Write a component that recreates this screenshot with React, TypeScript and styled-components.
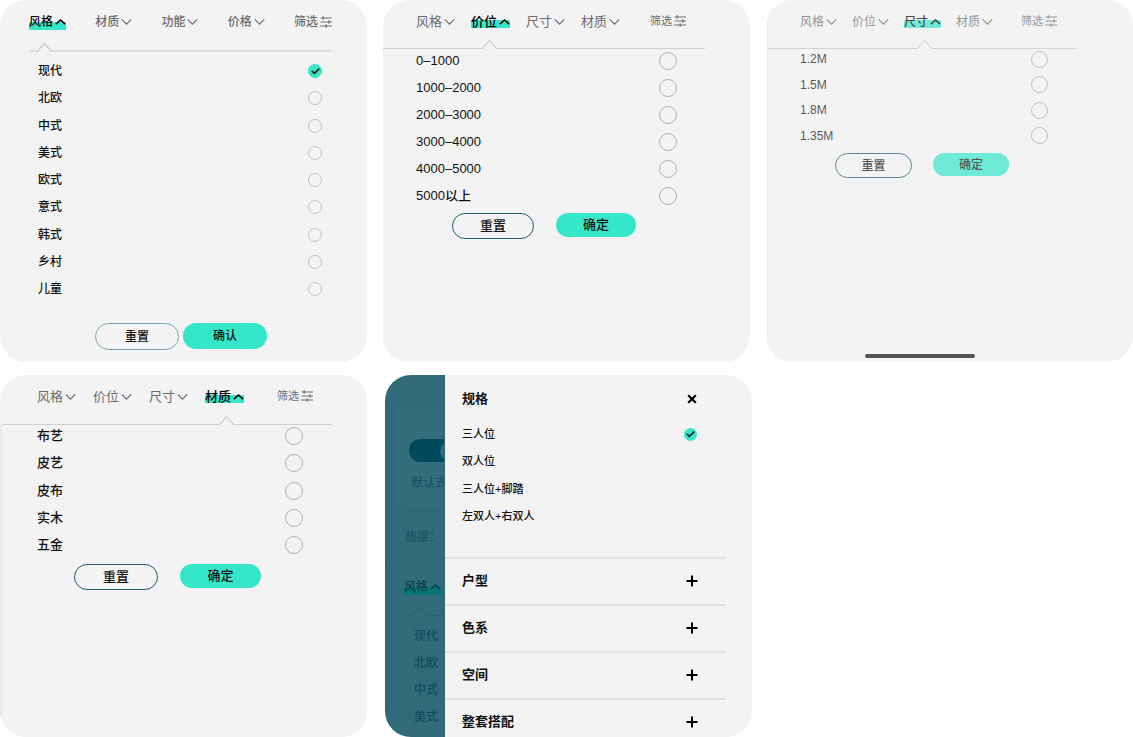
import React from "react";
import styled, { createGlobalStyle, css } from "styled-components";

const GlobalStyle = createGlobalStyle`
  *, *::before, *::after { box-sizing: border-box; }
  body {
    margin: 0;
    background: #fff;
    color: #111;
    font-family: "Liberation Sans", "Noto Sans CJK SC", sans-serif;
  }
  button, input { font: inherit; color: inherit; margin: 0; padding: 0; }
  ul, h2, h3 { margin: 0; padding: 0; font: inherit; list-style: none; }
`;

const ACCENT = "#36e6c9";

const Page = styled.main`
  display: flex;
  flex-direction: column;
  gap: 13px;
`;

const CardRow = styled.div<{ $gap: number }>`
  display: flex;
  gap: ${(p) => p.$gap}px;
`;

const Card = styled.section`
  flex: 0 0 calc((100% - 32px) / 3);
  min-height: 362px;
  border-radius: 26px;
  background: #f3f3f3;
  overflow: hidden;
  display: flex;
  flex-direction: column;
`;

const Content = styled.form<{ $faded?: boolean }>`
  flex: 1;
  display: flex;
  flex-direction: column;
  padding-top: 14px;
  opacity: ${(p) => (p.$faded ? 0.7 : 1)};
`;

const TabBar = styled.nav<{ $left: number; $right: number; $gap: number; $spread?: boolean; $size: number }>`
  display: flex;
  gap: ${(p) => p.$gap}px;
  padding: 0 ${(p) => p.$right}px 0 ${(p) => p.$left}px;
  justify-content: ${(p) => (p.$spread ? "space-between" : "flex-start")};
  font-size: ${(p) => p.$size}px;
  font-weight: ${(p) => (p.$spread ? 500 : 400)};
`;

const Tab = styled.button<{ $active?: boolean; $low?: boolean }>`
  display: flex;
  align-items: center;
  gap: 2px;
  height: 16px;
  border: 0;
  background: none;
  line-height: 16px;
  color: #6c6c6c;
  white-space: nowrap;
  ${(p) =>
    p.$active &&
    css`
      color: #000;
      font-weight: 500;
      background: linear-gradient(${ACCENT}, ${ACCENT}) 0 ${p.$low ? 8 : 6}px / 100% 8px no-repeat;
    `}
`;

const FilterButton = styled(Tab)`
  margin-left: auto;
  font-size: 11px;
  height: 14px;
`;

const Divider = styled.div<{ $top: number; $left: number; $right: number }>`
  display: flex;
  align-items: flex-end;
  margin: ${(p) => p.$top}px ${(p) => p.$right}px 0 ${(p) => p.$left}px;
  svg { display: block; flex: none; }
`;

const Rule = styled.span<{ $width?: number; $thick?: boolean; $color: string }>`
  flex: ${(p) => (p.$width === undefined ? "1" : `0 0 ${p.$width}px`)};
  height: ${(p) => (p.$thick ? 2 : 1)}px;
  background: ${(p) => p.$color};
`;

const Body = styled.div<{ $edge?: boolean }>`
  flex: 1;
  border-left: ${(p) => (p.$edge ? "2px solid #e9e9e9" : "0")};
`;

const Options = styled.ul<{ $top: number; $left: number; $right: number; $height: number; $size: number }>`
  display: flex;
  flex-direction: column;
  justify-content: space-between;
  min-height: ${(p) => p.$height}px;
  margin-top: ${(p) => p.$top}px;
  padding: 0 ${(p) => p.$right}px 0 ${(p) => p.$left}px;
  font-size: ${(p) => p.$size}px;
  font-weight: 500;
`;

const Option = styled.label`
  display: flex;
  align-items: center;
  justify-content: space-between;
  line-height: 18px;
`;

const RadioBox = styled.span`
  display: grid;
  place-items: center;
  > * { grid-area: 1 / 1; }
  svg { pointer-events: none; display: none; }
  input:checked + svg { display: block; }
`;

const RadioInput = styled.input<{ $size: number; $color: string }>`
  appearance: none;
  width: ${(p) => p.$size}px;
  height: ${(p) => p.$size}px;
  border: 1px solid ${(p) => p.$color};
  border-radius: 50%;
  &:checked { background: ${ACCENT}; border-color: ${ACCENT}; }
`;

const Actions = styled.div<{ $top: number; $left: number; $gap: number }>`
  display: flex;
  align-items: flex-start;
  gap: ${(p) => p.$gap}px;
  margin-top: ${(p) => p.$top}px;
  padding-left: ${(p) => p.$left}px;
`;

const ActionButton = styled.button<{ $w: number; $h: number; $size: number; $line?: string }>`
  width: ${(p) => p.$w}px;
  height: ${(p) => p.$h}px;
  border: ${(p) => (p.$line ? `1px solid ${p.$line}` : "0")};
  border-radius: 14px;
  background: ${(p) => (p.$line ? "transparent" : ACCENT)};
  color: #111;
  font-size: ${(p) => p.$size}px;
  font-weight: 500;
  line-height: 20px;
`;

const HomeBar = styled.div`
  width: 110px;
  height: 4px;
  margin: auto auto 4px 99px;
  border-radius: 2px;
  background: #555;
`;

const DrawerCard = styled(Card)`
  flex-direction: row;
  height: 362px;
`;

const Backdrop = styled.div`
  flex: 0 0 60px;
  overflow: hidden;
  background: #316a79;
  color: #17505f;
  border-right: 1px solid #286575;
  white-space: nowrap;
  font-size: 12px;
  line-height: 18px;
`;

const TogglePanel = styled.div`
  width: 120px;
  height: 99px;
  margin: 32px 0 0 10px;
  padding: 32px 0 0 14px;
  border-radius: 10px;
  background: #346d7b;
`;

const Toggle = styled.div`
  display: flex;
  align-items: center;
  justify-content: flex-end;
  width: 54px;
  height: 23px;
  padding-right: 3px;
  border-radius: 12px;
  background: #004a5b;
  &::after {
    content: "";
    width: 20px;
    height: 20px;
    border-radius: 50%;
    background: #316a79;
  }
`;

const ToggleText = styled.p`
  margin: 12px 0 0 2px;
`;

const HotSearch = styled.p`
  margin: 22px 0 0;
  padding: 0 0 17px 20px;
  border-bottom: 1px solid #2d6675;
`;

const DimTab = styled.div`
  display: flex;
  align-items: center;
  gap: 2px;
  width: 38px;
  margin: 15px 0 0 19px;
  color: #0b404d;
  font-weight: 500;
  line-height: 16px;
  background: linear-gradient(#067674, #067674) 0 8px / 100% 8px no-repeat;
`;

const DimList = styled.ul`
  display: grid;
  gap: 9px;
  padding: 11px 0 0 29px;
  color: #134b5a;
  font-weight: 500;
`;

const Drawer = styled.div`
  flex: 1;
  padding-right: 26px;
`;

const DrawerHeading = styled.div`
  display: flex;
  align-items: center;
  justify-content: space-between;
  padding: 0 28px 0 17px;
  font-size: 13px;
  font-weight: 700;
  color: #111;
  line-height: 18px;
`;

const DrawerTop = styled.div`
  height: 182px;
  padding-top: 15px;
`;

const DrawerSection = styled.div`
  height: 47px;
  padding-top: 13px;
  border-top: 2px solid #e2e2e2;
`;

const IconButton = styled.button`
  display: grid;
  place-items: center;
  width: 12px;
  height: 12px;
  border: 0;
  background: none;
`;

function Chevron({ up = false, bold = false }: { up?: boolean; bold?: boolean }) {
  return (
    <svg width="11" height="8" viewBox="0 0 12 8" fill="none" stroke="currentColor" strokeWidth={bold ? 1.8 : 1.3} aria-hidden="true">
      <path d={up ? "M1 6.2 6 1.8l5 4.4" : "M.8 1.2 6 6.3l5.2-5.1"} />
    </svg>
  );
}

function FilterIcon() {
  return (
    <svg width="12" height="12" viewBox="0 0 12 12" fill="none" stroke="currentColor" strokeWidth="1.2" aria-hidden="true">
      <path d="M.5 2H12M.5 6H12M0 10h12M3.2.2v3.6M9 4.2v3.6M6.2 8.2v3.6" />
    </svg>
  );
}

function Notch({ color, thick = false }: { color: string; thick?: boolean }) {
  return (
    <svg width="15" height="10" viewBox="0 0 15 10" fill="none" stroke={color} strokeWidth={thick ? 1.4 : 1} aria-hidden="true">
      <path d={thick ? "M0 9h.6L7.5 1.6 14.4 9h.6" : "M0 9.5h.4L7.5 1.5l7.1 8h.4"} />
    </svg>
  );
}

function Radio({ name, size, color, checked }: { name: string; size: number; color: string; checked?: boolean }) {
  return (
    <RadioBox>
      <RadioInput type="radio" name={name} $size={size} $color={color} defaultChecked={checked} />
      <svg width="9" height="8" viewBox="0 0 9 8" fill="none" stroke="#06251f" strokeWidth="1.7" aria-hidden="true">
        <path d="M.8 3.8 3.5 6.4 8.2 1.6" />
      </svg>
    </RadioBox>
  );
}

type PanelSpec = {
  id: string;
  tabs: string[];
  active: number;
  options: string[];
  checked?: number;
  primary?: boolean;
  faded?: boolean;
  edge?: boolean;
  confirm: string;
  resetLine: string;
  lineColor: string;
  radio: { size: number; color: string };
  bar: { left: number; right: number; gap: number; size: number };
  divider: { top: number; left: number; right: number; lead: number };
  list: { top: number; left: number; right: number; height: number; size: number };
  actions: { top: number; left: number; gap: number; reset: [number, number]; ok: [number, number]; size: number };
};

const style: PanelSpec = {
  id: "style",
  tabs: ["风格", "材质", "功能", "价格"],
  active: 0,
  options: ["现代", "北欧", "中式", "美式", "欧式", "意式", "韩式", "乡村", "儿童"],
  checked: 0,
  primary: true,
  confirm: "确认",
  resetLine: "#7fa3ae",
  lineColor: "#dcdcdc",
  radio: { size: 14, color: "#c0c0c0" },
  bar: { left: 29, right: 35, gap: 0, size: 12 },
  divider: { top: 12, left: 30, right: 36, lead: 7 },
  list: { top: 10, left: 38, right: 45, height: 236, size: 12 },
  actions: { top: 25, left: 95, gap: 4, reset: [84, 27], ok: [84, 26], size: 12 },
};

const price: PanelSpec = {
  id: "price",
  tabs: ["风格", "价位", "尺寸", "材质"],
  active: 1,
  options: ["0–1000", "1000–2000", "2000–3000", "3000–4000", "4000–5000", "5000以上"],
  confirm: "确定",
  resetLine: "#1f5a6c",
  lineColor: "#cfcfcf",
  radio: { size: 18, color: "#b0b0b0" },
  bar: { left: 33, right: 64, gap: 16, size: 13 },
  divider: { top: 9, left: 0, right: 45, lead: 99 },
  list: { top: 3, left: 33, right: 73, height: 153, size: 13 },
  actions: { top: 8, left: 69, gap: 22, reset: [82, 26], ok: [80, 24], size: 13 },
};

const size: PanelSpec = {
  id: "size",
  tabs: ["风格", "价位", "尺寸", "材质"],
  active: 2,
  options: ["1.2M", "1.5M", "1.8M", "1.35M"],
  faded: true,
  confirm: "确定",
  resetLine: "#1f5a6c",
  lineColor: "#c4c4c4",
  radio: { size: 17, color: "#a8a8a8" },
  bar: { left: 34, right: 76, gap: 15, size: 12 },
  divider: { top: 9, left: 2, right: 58, lead: 149 },
  list: { top: 1, left: 34, right: 85, height: 95, size: 12 },
  actions: { top: 8, left: 69, gap: 21, reset: [77, 25], ok: [76, 23], size: 12 },
};

const material: PanelSpec = {
  id: "material",
  tabs: ["风格", "价位", "尺寸", "材质"],
  active: 3,
  options: ["布艺", "皮艺", "皮布", "实木", "五金"],
  edge: true,
  confirm: "确定",
  resetLine: "#1f5a6c",
  lineColor: "#cfcfcf",
  radio: { size: 18, color: "#b0b0b0" },
  bar: { left: 37, right: 54, gap: 17, size: 13 },
  divider: { top: 10, left: 2, right: 35, lead: 217 },
  list: { top: 2, left: 35, right: 64, height: 127, size: 13 },
  actions: { top: 10, left: 72, gap: 22, reset: [84, 26], ok: [81, 24], size: 13 },
};

function FilterPanel({ spec, children }: { spec: PanelSpec; children?: React.ReactNode }) {
  const { bar, divider, list, actions, radio } = spec;
  return (
    <Card>
      <Content $faded={spec.faded}>
        <TabBar $left={bar.left} $right={bar.right} $gap={bar.gap} $size={bar.size} $spread={spec.primary}>
          {spec.tabs.map((tab, i) => (
            <Tab key={tab} type="button" $active={i === spec.active} $low={spec.primary}>
              {tab}
              <Chevron up={i === spec.active} bold={i === spec.active} />
            </Tab>
          ))}
          {spec.primary ? (
            <Tab type="button">筛选<FilterIcon /></Tab>
          ) : (
            <FilterButton type="button">筛选<FilterIcon /></FilterButton>
          )}
        </TabBar>
        <Divider $top={divider.top} $left={divider.left} $right={divider.right}>
          <Rule $width={divider.lead} $thick={spec.primary} $color={spec.lineColor} />
          <Notch color={spec.primary ? "#cccccc" : "#b8b8b8"} thick={spec.primary} />
          <Rule $thick={spec.primary} $color={spec.lineColor} />
        </Divider>
        <Body $edge={spec.edge}>
          <Options $top={list.top} $left={list.left} $right={list.right} $height={list.height} $size={list.size}>
            {spec.options.map((option, i) => (
              <li key={option}>
                <Option>
                  {option}
                  <Radio name={spec.id} size={radio.size} color={radio.color} checked={i === spec.checked} />
                </Option>
              </li>
            ))}
          </Options>
          <Actions $top={actions.top} $left={actions.left} $gap={actions.gap}>
            <ActionButton type="reset" $w={actions.reset[0]} $h={actions.reset[1]} $size={actions.size} $line={spec.resetLine}>
              重置
            </ActionButton>
            <ActionButton type="button" $w={actions.ok[0]} $h={actions.ok[1]} $size={actions.size}>
              {spec.confirm}
            </ActionButton>
          </Actions>
        </Body>
      </Content>
      {children}
    </Card>
  );
}

function DrawerPanel() {
  return (
    <DrawerCard>
      <Backdrop>
        <TogglePanel>
          <Toggle />
          <ToggleText>默认去</ToggleText>
        </TogglePanel>
        <HotSearch>热搜：</HotSearch>
        <DimTab>风格<Chevron up bold /></DimTab>
        <Divider $top={11} $left={20} $right={0}>
          <Rule $width={7} $color="#28606f" />
          <Notch color="#28606f" />
          <Rule $color="#28606f" />
        </Divider>
        <DimList>
          {["现代", "北欧", "中式", "美式"].map((t) => (
            <li key={t}>{t}</li>
          ))}
        </DimList>
      </Backdrop>
      <Drawer>
        <DrawerTop>
          <DrawerHeading>
            <h2>规格</h2>
            <IconButton type="button" aria-label="关闭">
              <svg width="10" height="10" viewBox="0 0 10 10" stroke="#000" strokeWidth="2.2" aria-hidden="true">
                <path d="M1.2 1.2l7.6 7.6M8.8 1.2 1.2 8.8" />
              </svg>
            </IconButton>
          </DrawerHeading>
          <Options $top={17} $left={17} $right={29} $height={100} $size={11}>
            {["三人位", "双人位", "三人位+脚踏", "左双人+右双人"].map((t, i) => (
              <li key={t}>
                <Option>
                  {t}
                  {i === 0 && <Radio name="spec" size={13} color={ACCENT} checked />}
                </Option>
              </li>
            ))}
          </Options>
        </DrawerTop>
        {["户型", "色系", "空间", "整套搭配"].map((t) => (
          <DrawerSection key={t}>
            <DrawerHeading>
              <h3>{t}</h3>
              <IconButton type="button" aria-label={t}>
                <svg width="12" height="12" viewBox="0 0 12 12" stroke="#000" strokeWidth="2" aria-hidden="true">
                  <path d="M6 .5v11M.5 6h11" />
                </svg>
              </IconButton>
            </DrawerHeading>
          </DrawerSection>
        ))}
      </Drawer>
    </DrawerCard>
  );
}

export default function App() {
  return (
    <>
      <GlobalStyle />
      <Page>
        <CardRow $gap={16}>
          <FilterPanel spec={style} />
          <FilterPanel spec={price} />
          <FilterPanel spec={size}>
            <HomeBar />
          </FilterPanel>
        </CardRow>
        <CardRow $gap={18}>
          <FilterPanel spec={material} />
          <DrawerPanel />
        </CardRow>
      </Page>
    </>
  );
}
